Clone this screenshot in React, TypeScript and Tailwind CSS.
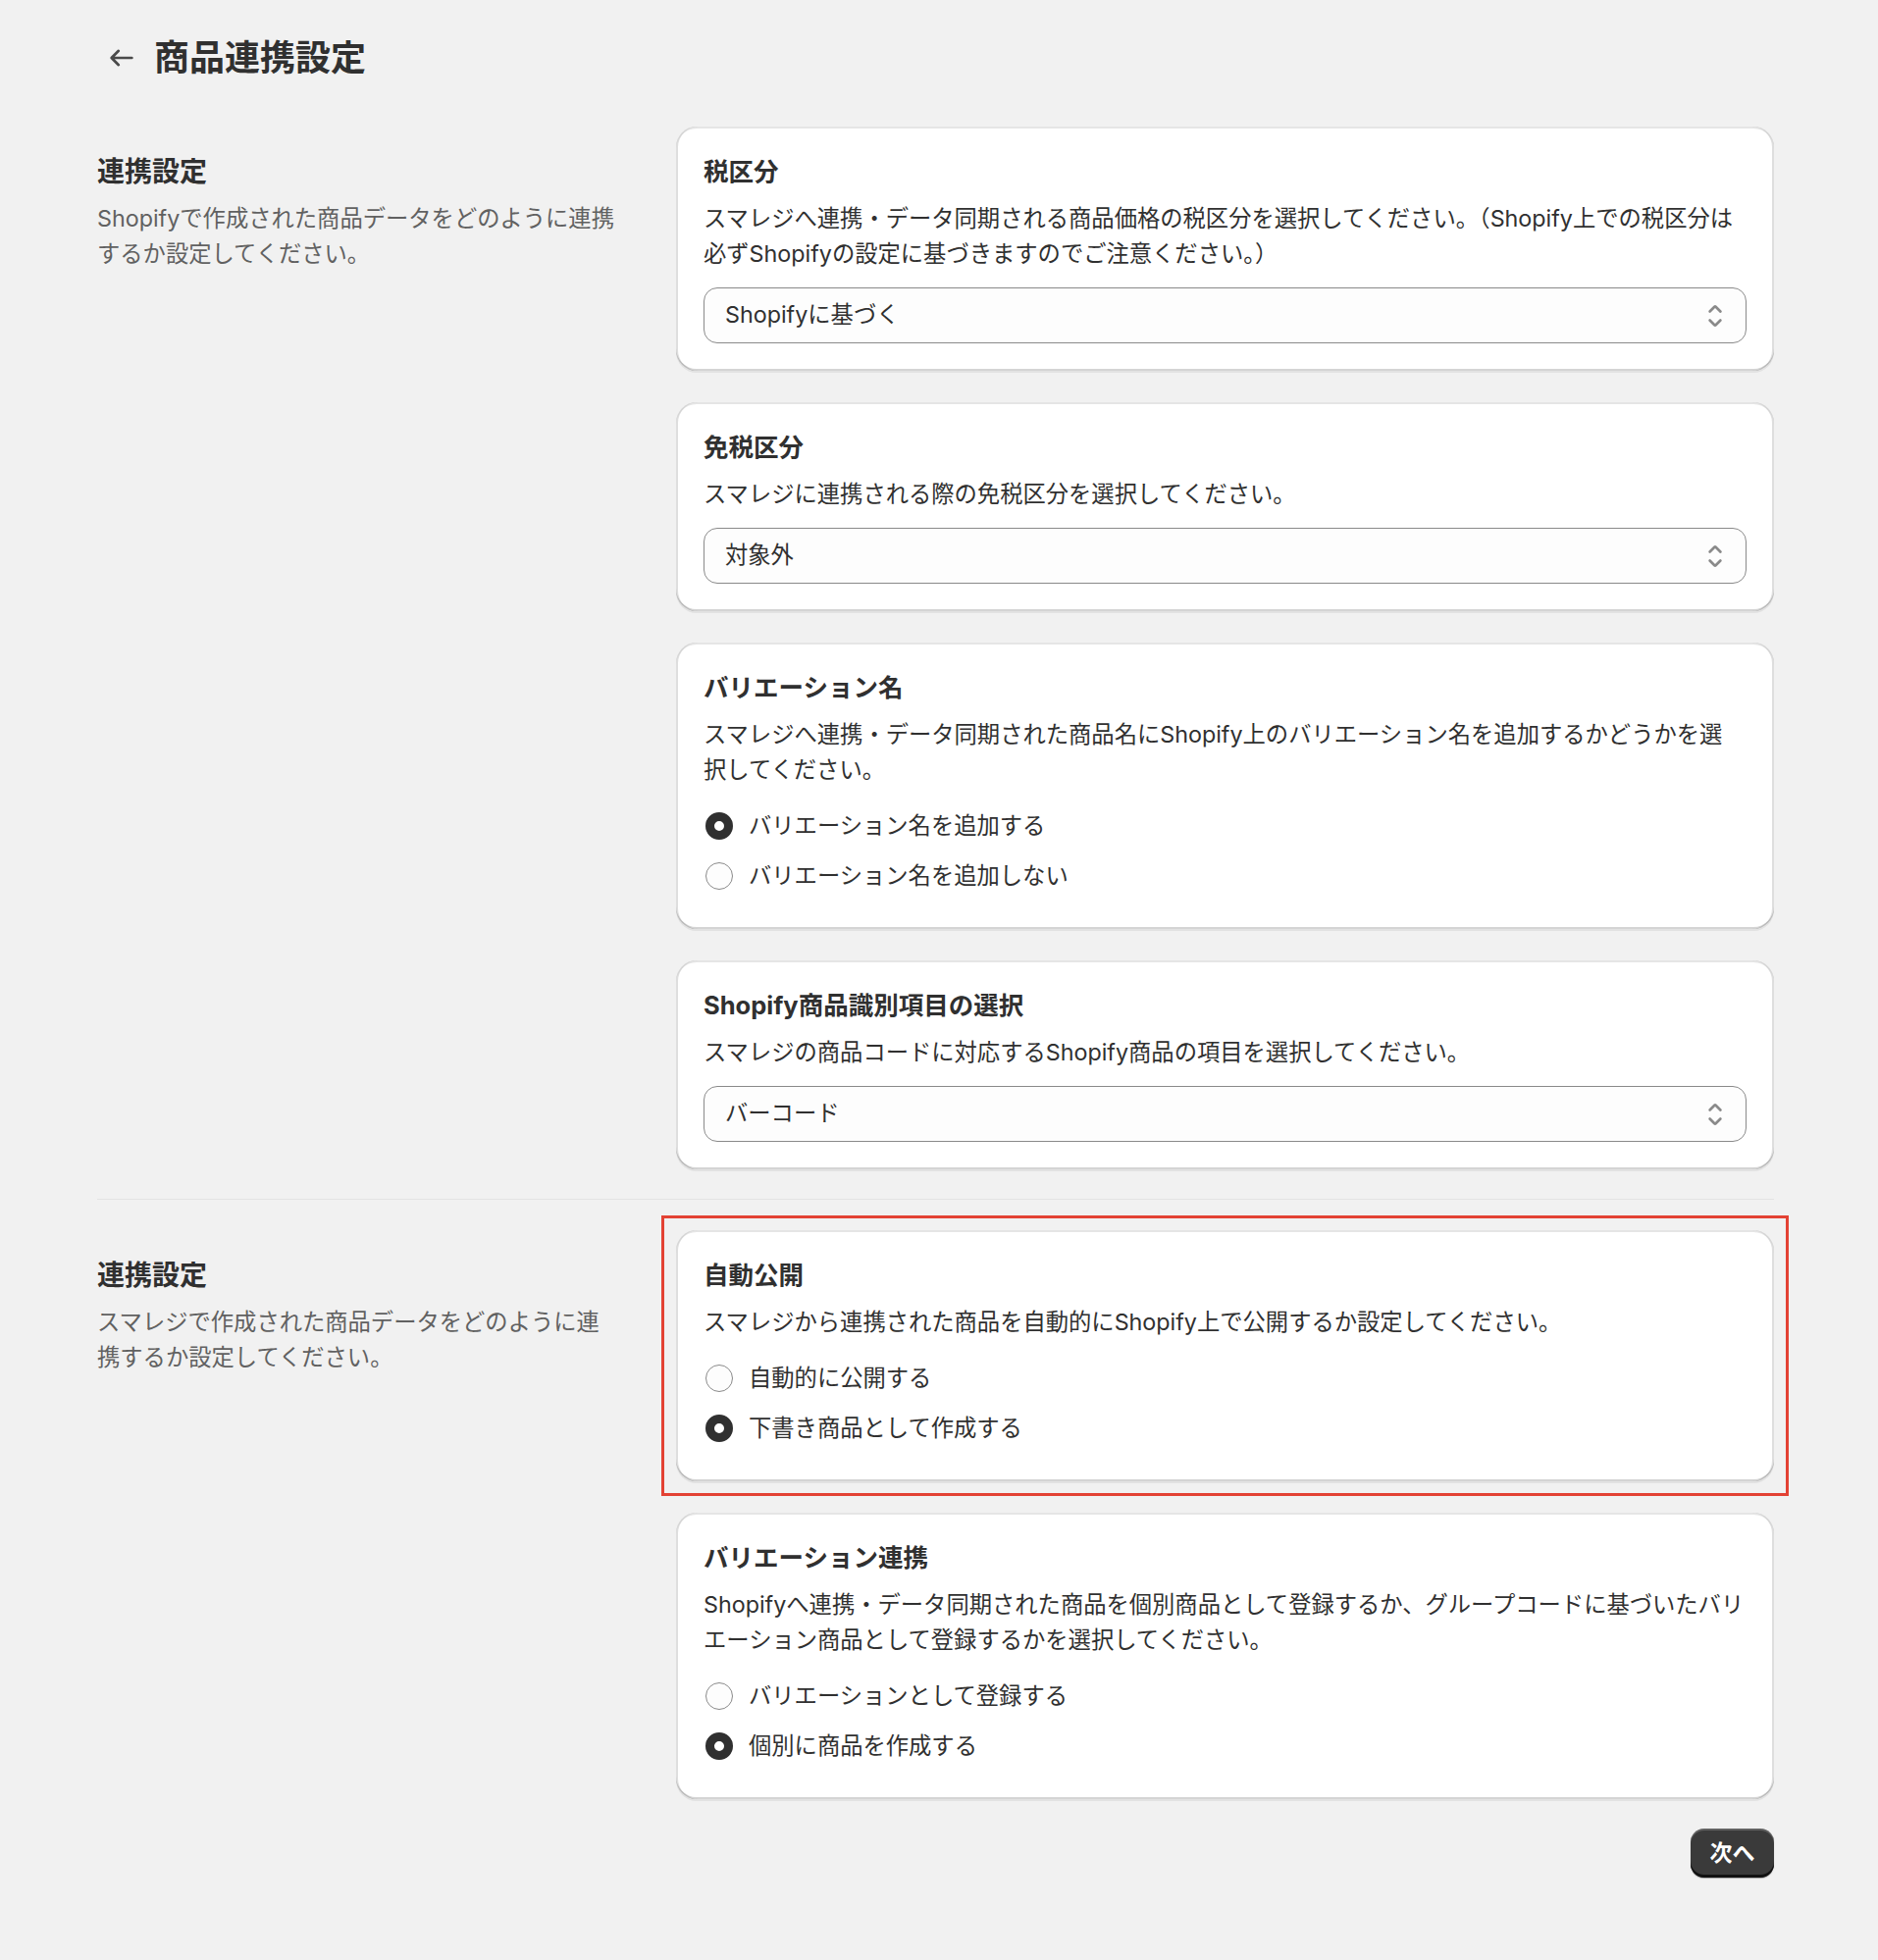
// 商品連携設定 — settings page with annotated sections
import React from 'react';

const font = "font-['Inter','Noto_Sans_CJK_JP',sans-serif]";

function Chevrons() {
  return (
    <svg viewBox="0 0 20 20" className="w-[36px] h-[36px] text-[#8a8a8a]" fill="currentColor">
      <path d="M10.884 4.323a1.25 1.25 0 0 0-1.768 0l-2.646 2.647a.75.75 0 0 0 1.06 1.06l2.47-2.47 2.47 2.47a.75.75 0 1 0 1.06-1.06l-2.646-2.647Z" />
      <path d="m13.53 13.03-2.646 2.647a1.25 1.25 0 0 1-1.768 0l-2.646-2.647a.75.75 0 0 1 1.06-1.06l2.47 2.47 2.47-2.47a.75.75 0 0 1 1.06 1.06Z" />
    </svg>
  );
}

function Select({ value }: { value: string }) {
  return (
    <div className="mt-[16px] h-[57px] rounded-[14px] border-[1.5px] border-[#8a8a8a] bg-[#fdfdfd] pl-[21px] pr-[13px] flex items-center justify-between">
      <span className="text-[23.3px] text-[#303030]">{value}</span>
      <Chevrons />
    </div>
  );
}

function Radio({ label, checked }: { label: string; checked?: boolean }) {
  return (
    <div className="h-[40px] flex items-center gap-[16px]">
      <div className="ml-[2px] w-[28px] h-[28px] flex items-center justify-center">
        {checked ? (
          <div className="w-[28px] h-[28px] rounded-full border-[9px] border-[#303030] bg-white" />
        ) : (
          <div className="w-[28px] h-[28px] rounded-full border-[1.5px] border-[#8a8a8a] bg-[#fdfdfd]" />
        )}
      </div>
      <span className="text-[23.3px] text-[#303030]">{label}</span>
    </div>
  );
}

function Card({ title, children }: { title: string; children: React.ReactNode }) {
  return (
    <div className="bg-white rounded-[21px] px-[28px] pt-[28px] pb-[28px] shadow-[0_2px_0_0_rgba(26,26,26,0.07),inset_0_2px_0_0_rgba(204,204,204,0.5),inset_0_-2px_0_0_rgba(0,0,0,0.17),inset_-2px_0_0_0_rgba(0,0,0,0.13),inset_2px_0_0_0_rgba(0,0,0,0.13)]">
      <h3 className="text-[25.5px] leading-[36px] font-bold text-[#303030]">{title}</h3>
      {children}
    </div>
  );
}

function Desc({ children }: { children: React.ReactNode }) {
  return <p className="mt-[12px] text-[23.3px] leading-[36px] text-[#303030]">{children}</p>;
}

function RadioGroup({ children }: { children: React.ReactNode }) {
  return <div className="mt-[19px] mb-[6px] flex flex-col gap-[11px]">{children}</div>;
}

function SectionInfo({ title, text }: { title: string; text: string }) {
  return (
    <div className="w-[533px] pt-[28px]">
      <h2 className="text-[28px] leading-[36px] font-bold text-[#303030]">{title}</h2>
      <p className="mt-[12px] text-[23.3px] leading-[36px] text-[#616161]">{text}</p>
    </div>
  );
}

export default function App() {
  return (
    <div className={`${font} min-h-screen bg-[#f1f1f1] pl-[99px] pr-[106px] pt-[34px] pb-[84px]`}>
      {/* Header */}
      <div className="h-[50px] flex items-center gap-[8px]">
        <button className="w-[50px] h-[50px] flex items-center justify-center rounded-[14px]">
          <svg viewBox="0 0 20 20" className="w-[36px] h-[36px] text-[#4a4a4a]" fill="currentColor">
            <path d="M16.5 10a.75.75 0 0 1-.75.75h-9.69l2.72 2.72a.75.75 0 0 1-1.06 1.06l-4-4a.75.75 0 0 1 0-1.06l4-4a.75.75 0 0 1 1.06 1.06l-2.72 2.72h9.69a.75.75 0 0 1 .75.75Z" />
          </svg>
        </button>
        <h1 className="text-[36px] leading-[50px] font-bold text-[#303030]">商品連携設定</h1>
      </div>

      {/* Section 1 */}
      <div className="mt-[45px] flex justify-between pb-[30px] border-b border-[#e3e3e3]">
        <SectionInfo title="連携設定" text="Shopifyで作成された商品データをどのように連携するか設定してください。" />
        <div className="w-[1119px] flex flex-col gap-[32px]">
          <Card title="税区分">
            <Desc>
              スマレジへ連携・データ同期される商品価格の税区分を選択してください。（Shopify上での税区分は
              <br />
              必ずShopifyの設定に基づきますのでご注意ください。）
            </Desc>
            <Select value="Shopifyに基づく" />
          </Card>
          <Card title="免税区分">
            <Desc>スマレジに連携される際の免税区分を選択してください。</Desc>
            <Select value="対象外" />
          </Card>
          <Card title="バリエーション名">
            <Desc>
              スマレジへ連携・データ同期された商品名にShopify上のバリエーション名を追加するかどうかを選
              <br />
              択してください。
            </Desc>
            <RadioGroup>
              <Radio label="バリエーション名を追加する" checked />
              <Radio label="バリエーション名を追加しない" />
            </RadioGroup>
          </Card>
          <Card title="Shopify商品識別項目の選択">
            <Desc>スマレジの商品コードに対応するShopify商品の項目を選択してください。</Desc>
            <Select value="バーコード" />
          </Card>
        </div>
      </div>

      {/* Section 2 */}
      <div className="pt-[31px] flex justify-between">
        <SectionInfo title="連携設定" text="スマレジで作成された商品データをどのように連携するか設定してください。" />
        <div className="w-[1119px] flex flex-col gap-[32px]">
          <div className="-m-[15px] p-[12px] border-[3px] border-[#e34234]">
            <Card title="自動公開">
              <Desc>スマレジから連携された商品を自動的にShopify上で公開するか設定してください。</Desc>
              <RadioGroup>
                <Radio label="自動的に公開する" />
                <Radio label="下書き商品として作成する" checked />
              </RadioGroup>
            </Card>
          </div>
          <Card title="バリエーション連携">
            <Desc>
              Shopifyへ連携・データ同期された商品を個別商品として登録するか、グループコードに基づいたバリ
              <br />
              エーション商品として登録するかを選択してください。
            </Desc>
            <RadioGroup>
              <Radio label="バリエーションとして登録する" />
              <Radio label="個別に商品を作成する" checked />
            </RadioGroup>
          </Card>
          <div className="mt-[-2px] flex justify-end">
            <button className="w-[85px] h-[50px] rounded-[14px] bg-[#3a3a3a] text-white text-[23px] font-bold shadow-[inset_0_-3px_0_0_#111,inset_0_2px_0_0_rgba(255,255,255,0.2),0_1px_1px_rgba(0,0,0,0.3)]">
              次へ
            </button>
          </div>
        </div>
      </div>
    </div>
  );
}
